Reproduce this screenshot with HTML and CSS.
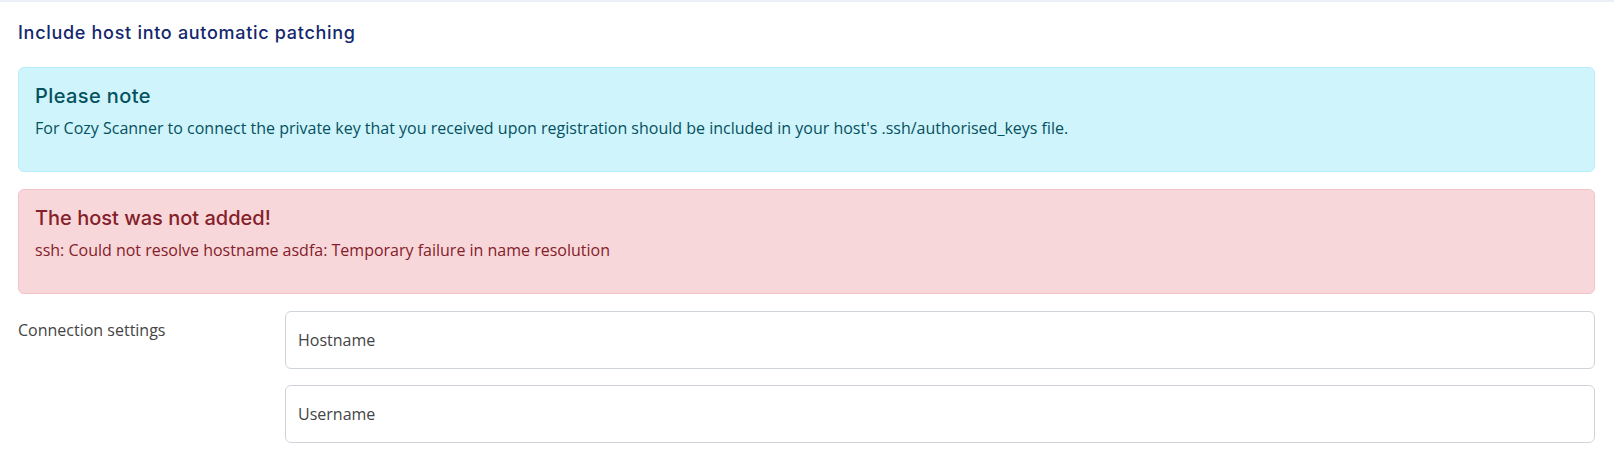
FILE: index.html
```html
<!DOCTYPE html>
<html lang="en">
<head>
<meta charset="utf-8">
<title>Include host into automatic patching</title>
<link rel="stylesheet" href="styles.css">
</head>
<body>
<div class="topbar"></div>
<main class="page">
  <h2 class="page-title">Include host into automatic patching</h2>
  <div class="alert alert-info">
    <h4 class="alert-heading">Please note</h4>
    <p class="alert-text">For Cozy Scanner to connect the private key that you received upon registration should be included in your host's .ssh/authorised_keys file.</p>
  </div>
  <div class="alert alert-danger">
    <h4 class="alert-heading alert-heading-tight">The host was not added!</h4>
    <p class="alert-text">ssh: Could not resolve hostname asdfa: Temporary failure in name resolution</p>
  </div>
  <div class="form-row">
    <label class="form-label">Connection settings</label>
    <div class="form-fields">
      <input class="form-input" type="text" placeholder="Hostname">
      <input class="form-input" type="text" placeholder="Username">
    </div>
  </div>
</main>
</body>
</html>
```
FILE: styles.css
```css
* { box-sizing: border-box; }
html, body { margin: 0; padding: 0; background: #ffffff; }
body { font-family: "Open Sans", "Liberation Sans", sans-serif; color: #444; }
.topbar { height: 2px; background: #eceef8; }
.page { padding: 20px 19px 0 18px; }
.page-title {
  margin: 0 0 23px 0;
  font-family: Inter, "Noto Sans", sans-serif;
  font-weight: 500;
  font-size: 18px;
  line-height: 22px;
  letter-spacing: 0.7px;
  color: #14286e;
}
.alert {
  height: 105px;
  border: 1px solid transparent;
  border-radius: 6px;
  padding: 16px 16px;
  margin-bottom: 17px;
}
.alert-info { background: #cff4fc; border-color: #b6effb; color: #055160; }
.alert-danger { background: #f8d7da; border-color: #f5c2c7; color: #842029; }
.alert-heading {
  margin: 0 0 8px 0;
  font-family: Inter, "Noto Sans", sans-serif;
  font-weight: 500;
  font-size: 20px;
  line-height: 24px;
  letter-spacing: 0.4px;
}
.alert-heading-tight { letter-spacing: 0; }
.alert-text { margin: 0; font-size: 16px; line-height: 24px; }
.form-row { display: flex; }
.form-label { width: 267px; flex: none; font-size: 16px; line-height: 24px; padding-top: 7px; color: #444; }
.form-fields { flex: 1; display: flex; flex-direction: column; gap: 16px; }
.form-input {
  height: 58px;
  border: 1px solid #ced4da;
  border-radius: 6px;
  padding: 0 12px;
  font-family: "Open Sans", "Liberation Sans", sans-serif;
  font-size: 16px;
  color: #444;
  background: #fff;
  outline: none;
}
.form-input::placeholder { color: #444; opacity: 1; }
```
